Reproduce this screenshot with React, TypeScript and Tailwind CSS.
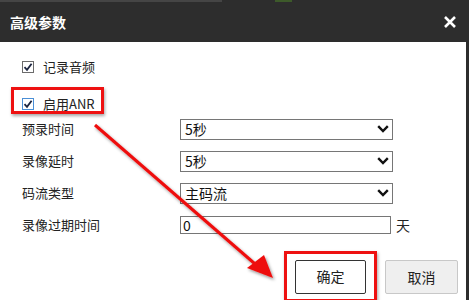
import React from 'react'

const font = { fontFamily: '"Noto Sans CJK SC", "Noto Sans", sans-serif' }

function Check({ focus }: { focus?: boolean }) {
  return (
    <span
      className={`flex h-[12px] w-[12px] items-center justify-center border bg-white ${
        focus ? 'border-[#4a8fd6]' : 'border-[#6b6b6b]'
      }`}
    >
      <svg width="10" height="10" viewBox="0 0 10 10">
        <path d="M1.5 5.2 L4 7.8 L8.6 1.8" fill="none" stroke="#1c2540" strokeWidth="1.8" />
      </svg>
    </span>
  )
}

function Chevron() {
  return (
    <svg width="12" height="8" viewBox="0 0 12 8">
      <path d="M1.2 1.2 L6 6 L10.8 1.2" fill="none" stroke="#111" strokeWidth="2.4" />
    </svg>
  )
}

function SelectRow({ label, value }: { label: string; value: string }) {
  return (
    <div className="flex h-[32px] items-center">
      <span className="w-[158px] text-[13px] text-[#222]">{label}</span>
      <div className="flex h-[21px] w-[213px] items-center justify-between border border-[#767676] bg-white pl-[4px] pr-[3px]">
        <span className="text-[14px] leading-none text-[#111]">{value}</span>
        <Chevron />
      </div>
    </div>
  )
}

export default function App() {
  return (
    <div className="relative h-[300px] w-[469px] overflow-hidden bg-[#2d2d2d]" style={font}>
      {/* page behind the dialog */}
      <div className="flex h-[2px]">
        <div className="w-[222px] bg-[#454545]" />
        <div className="w-[53px]" />
        <div className="w-[17px] bg-[#3d5a2a]" />
      </div>

      {/* header */}
      <div className="flex h-[40px] items-center justify-between pl-[10px] pr-[12px]">
        <span className="text-[14px] font-bold text-white">高级参数</span>
        <svg width="14" height="14" viewBox="0 0 14 14">
          <path d="M2 2 L12 12 M12 2 L2 12" stroke="#fff" strokeWidth="2.6" />
        </svg>
      </div>

      {/* body */}
      <div className="mr-[3px] h-[258px] bg-white pl-[22px] pt-[14px]">
        <div className="flex h-[22px] items-center gap-[9px]">
          <Check />
          <span className="text-[13px] text-[#222]">记录音频</span>
        </div>

        <div className="-ml-[11px] mt-[9px] inline-flex h-[27px] w-[93px] items-center gap-[9px] border-[3px] border-[#ee1111] pl-[8px] pt-[6px] shadow-[1px_2px_3px_rgba(0,0,0,0.35)]">
          <Check focus />
          <span className="text-[13px] text-[#222]">启用ANR</span>
        </div>

        <div className="mt-[-1px]">
          <SelectRow label="预录时间" value="5秒" />
          <SelectRow label="录像延时" value="5秒" />
          <SelectRow label="码流类型" value="主码流" />
          <div className="flex h-[32px] items-center">
            <span className="w-[158px] text-[13px] text-[#222]">录像过期时间</span>
            <div className="flex h-[18px] w-[211px] items-center border border-[#767676] bg-white pl-[2px]">
              <span className="text-[14px] leading-none text-[#111]">0</span>
            </div>
            <span className="ml-[5px] text-[14px] text-[#222]">天</span>
          </div>
        </div>

        <div className="mt-[10px] flex justify-end gap-[8px] pr-[8px]">
          <div className="flex h-[51px] w-[93px] items-center justify-center border-[3px] border-[#ee1111] shadow-[1px_2px_3px_rgba(0,0,0,0.35)]">
            <button className="h-[34px] w-[71px] rounded-[2px] border border-[#333] bg-white text-[14px] text-[#222]">
              确定
            </button>
          </div>
          <button className="mt-[9px] h-[34px] w-[73px] rounded-[2px] border border-[#c8c8c8] bg-[#efefef] text-[14px] text-[#222]">
            取消
          </button>
        </div>
      </div>

      {/* annotation arrow */}
      <svg className="pointer-events-none absolute left-0 top-0" width="469" height="300">
        <defs>
          <filter id="sh" x="-10%" y="-10%" width="130%" height="130%">
            <feDropShadow dx="1.5" dy="2" stdDeviation="1.5" floodColor="#000" floodOpacity="0.4" />
          </filter>
        </defs>
        <g filter="url(#sh)">
          <line x1="95" y1="125" x2="262" y2="270" stroke="#ee1111" strokeWidth="3" />
          <polygon points="273,278 247,268 264,255" fill="#ee1111" />
        </g>
      </svg>
    </div>
  )
}
